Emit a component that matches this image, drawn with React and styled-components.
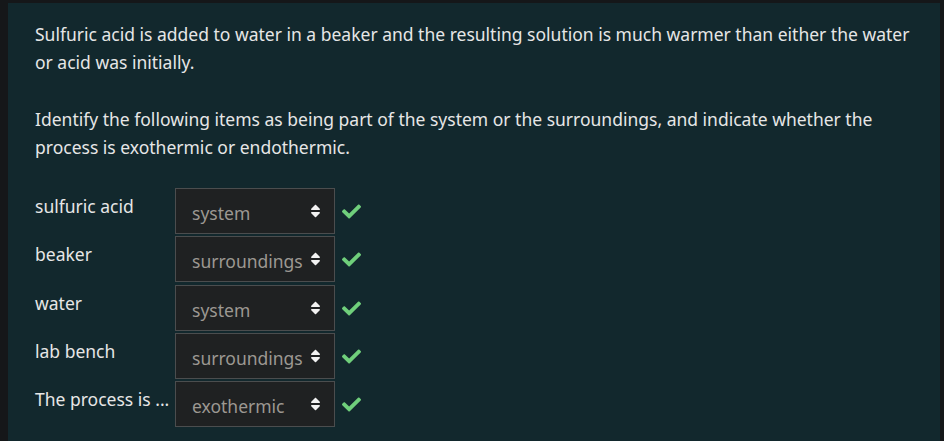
import React from "react";
import styled, { createGlobalStyle } from "styled-components";
import { FaCheck, FaSort } from "react-icons/fa";

const GlobalStyle = createGlobalStyle`
  html, body {
    margin: 0;
    padding: 0;
    background: #151719;
  }
  body {
    font-family: "Noto Sans", "Open Sans", sans-serif;
  }
`;

const Page = styled.div`
  padding: 3px 4px 0 8px;
  height: 441px;
  box-sizing: border-box;
`;

const Panel = styled.div`
  background: #12282d;
  height: 100%;
  padding: 17px 27px 0 27px;
  box-sizing: border-box;
  color: #e6e6e6;
  font-size: 17.5px;
  line-height: 28px;
  display: flex;
  flex-direction: column;
  gap: 27px;
`;

const Prompt = styled.div`
  display: flex;
  flex-direction: column;
  gap: 29px;
`;

const Paragraph = styled.p`
  margin: 0;
`;

const Rows = styled.div`
  display: flex;
  flex-direction: column;
  gap: 2.25px;
`;

const Row = styled.div`
  display: flex;
  align-items: flex-start;
`;

const Label = styled.div`
  width: 140px;
  padding-top: 4px;
  white-space: nowrap;
`;

const Select = styled.div`
  width: 160px;
  height: 46px;
  box-sizing: border-box;
  border: 1px solid #4b4d4e;
  background: #1f2122;
  color: #9c9892;
  display: flex;
  align-items: center;
  padding: 4px 13px 0 16px;
  justify-content: space-between;
`;

const Arrows = styled(FaSort)`
  color: #f2f2f2;
  width: 11px;
  height: 16px;
  margin-top: -4px;
`;

const Check = styled(FaCheck)`
  color: #6fcf7b;
  width: 19px;
  height: 19px;
  margin: 14px 0 0 7px;
`;

const items = [
  ["sulfuric acid", "system"],
  ["beaker", "surroundings"],
  ["water", "system"],
  ["lab bench", "surroundings"],
  ["The process is ...", "exothermic"],
];

const App = () => (
  <>
    <GlobalStyle />
    <Page>
      <Panel>
        <Prompt>
          <Paragraph>
            Sulfuric acid is added to water in a beaker and the resulting solution is much warmer than either the
            water or acid was initially.
          </Paragraph>
          <Paragraph>
            Identify the following items as being part of the system or the surroundings, and indicate whether the
            process is exothermic or endothermic.
          </Paragraph>
        </Prompt>
        <Rows>
          {items.map(([label, value]) => (
            <Row key={label}>
              <Label>{label}</Label>
              <Select>
                <span>{value}</span>
                <Arrows />
              </Select>
              <Check />
            </Row>
          ))}
        </Rows>
      </Panel>
    </Page>
  </>
);

export default App;
